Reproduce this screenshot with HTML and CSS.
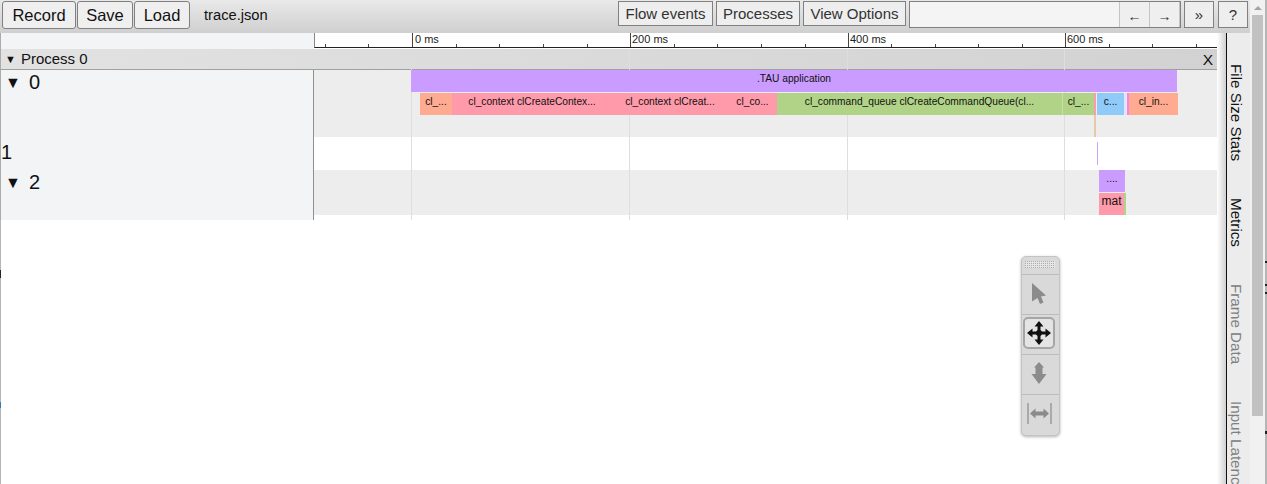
FILE: index.html
```html
<!DOCTYPE html>
<html lang="en">

<head>
    <meta charset="UTF-8">
    <title>trace.json</title>
    <link rel="stylesheet" href="styles.css">
</head>

<body>
    <div class="page">
        <div class="main">
            <header class="toolbar">
                <button class="btn-big btn-record">Record</button>
                <button class="btn-big btn-save">Save</button>
                <button class="btn-big btn-load">Load</button>
                <span class="file-name">trace.json</span>
                <div class="toolbar-right">
                    <button class="btn-small btn-flow">Flow events</button>
                    <button class="btn-small btn-proc">Processes</button>
                    <button class="btn-small btn-view">View Options</button>
                    <div class="search">
                        <span class="search-box"></span>
                        <span class="search-arrow">←</span>
                        <span class="search-arrow">→</span>
                    </div>
                    <span class="btn-square">»</span>
                    <span class="btn-square">?</span>
                </div>
            </header>

            <div class="content">
                <div class="view">
                    <div class="ruler-row">
                        <div class="label-col"></div>
                        <div class="ruler">
                            <svg class="ruler-ticks" width="903" height="14">
                                <path d="M97.5 0V14M315.5 0V14M533.5 0V14M750.5 0V14" stroke="#444" />
                                <path d="M10.5 11V14M53.5 11V14M141.5 11V14M184.5 11V14M228.5 11V14M272.5 11V14M359.5 11V14M402.5 11V14M446.5 11V14M490.5 11V14M576.5 11V14M620.5 11V14M663.5 11V14M707.5 11V14M794.5 11V14M837.5 11V14M881.5 11V14" stroke="#444" />
                            </svg>
                            <span class="tick-label tick-0">0 ms</span>
                            <span class="tick-label tick-200">200 ms</span>
                            <span class="tick-label tick-400">400 ms</span>
                            <span class="tick-label tick-600">600 ms</span>
                        </div>
                    </div>

                    <div class="process-head">
                        <span class="process-arrow">▼</span>
                        <span>Process 0</span>
                        <span class="process-close">X</span>
                    </div>

                    <div class="row row-0">
                        <div class="label-col row-label"><span class="arrow">▼</span>0</div>
                        <div class="track grey">
                            <div class="slice purple s-tau">.TAU application</div>
                            <div class="slice salmon s-a">cl_...</div>
                            <div class="slice pink s-b">cl_context clCreateContex...</div>
                            <div class="slice pink s-c">cl_context clCreat...</div>
                            <div class="slice pink s-d">cl_co...</div>
                            <div class="slice green s-e">cl_command_queue clCreateCommandQueue(cl...</div>
                            <div class="slice green s-f">cl_...</div>
                            <div class="slice pink s-g"></div>
                            <div class="slice blue s-h">c...</div>
                            <div class="slice pale s-i"></div>
                            <div class="slice magenta s-j"></div>
                            <div class="slice salmon s-k">cl_in...</div>
                            <div class="slice tan s-l"></div>
                        </div>
                    </div>

                    <div class="row row-1">
                        <div class="label-col row-label plain">1</div>
                        <div class="track">
                            <div class="slice lavender s-m"></div>
                        </div>
                    </div>

                    <div class="row row-2">
                        <div class="label-col row-label"><span class="arrow">▼</span>2</div>
                        <div class="track grey">
                            <div class="slice purple s-n">....</div>
                            <div class="slice pink s-o">mat</div>
                            <div class="slice green s-p"></div>
                        </div>
                    </div>

                    <div class="row row-end">
                        <div class="label-col"></div>
                        <div class="track"></div>
                    </div>

                    <i class="grid-line grid-0"></i>
                    <i class="grid-line grid-200"></i>
                    <i class="grid-line grid-400"></i>
                    <i class="grid-line grid-600"></i>
                </div>

                <aside class="side">
                    <div class="side-shade"></div>
                    <div class="side-tabs">
                        <span class="tab tab-on">File Size Stats</span>
                        <span class="tab tab-on">Metrics</span>
                        <span class="tab">Frame Data</span>
                        <span class="tab">Input Latency</span>
                    </div>
                </aside>
            </div>

            <div class="edge-left"></div>

            <div class="palette">
                <div class="grip"></div>
                <div class="tool">
                    <svg width="14" height="21" viewBox="0 0 14 21"><path d="M0 0L14 12.500L9 13.500L11.500 19.500L8 21L5.500 15L0 18.500Z" fill="#8b8b8b" /></svg>
                </div>
                <div class="tool">
                    <span class="tool-on">
                        <svg width="26" height="26" viewBox="0 0 26 26"><path d="M13 1L17.500 6.500H14.500V10L16 11.500H19.500V8.500L25 13L19.500 17.500V14.500H16L14.500 16V19.500H17.500L13 25L8.500 19.500H11.500V16L10 14.500H6.500V17.500L1 13L6.500 8.500V11.500H10L11.500 10V6.500H8.500Z" fill="#111" /></svg>
                    </span>
                </div>
                <div class="tool">
                    <svg width="16" height="22" viewBox="0 0 16 22"><path d="M8 0L13 5.500H11.500V12H15.500L8 22L0.500 12H4.500V5.500H3Z" fill="#8b8b8b" /></svg>
                </div>
                <div class="tool">
                    <svg width="25" height="21" viewBox="0 0 25 21"><path d="M1 0V21M24 0V21" stroke="#9a9a9a" stroke-width="1.500" /><path d="M3 10.500L8.500 5.500V8.500H16.500V5.500L22 10.500L16.500 15.500V12.500H8.500V15.500Z" fill="#8b8b8b" /></svg>
                </div>
            </div>
        </div>

        <div class="scrollbar">
            <span class="scroll-up"></span>
            <span class="scroll-thumb"></span>
        </div>
        <div class="edge-right"></div>
    </div>
</body>

</html>
```

FILE: styles.css
```css
html,
body {
    margin: 0;
    height: 100%;
    overflow: hidden;
}

body {
    font-family: "Liberation Sans", Arial, sans-serif;
    color: #111;
    background: #fff;
}

.page {
    display: flex;
    height: 484px;
}

.main {
    position: relative;
    width: 1250px;
    display: flex;
    flex-direction: column;
}

/* toolbar */
.toolbar {
    height: 33px;
    flex: none;
    display: flex;
    align-items: flex-start;
    padding: 1px 2px 0 2px;
    box-sizing: border-box;
    background: linear-gradient(#e9e9e9, #cfcfcf);
}

.btn-big {
    height: 28px;
    padding: 0;
    margin-right: 1px;
    font: 16.500px "Liberation Sans", Arial, sans-serif;
    color: #111;
    background: #efefef;
    border: 1px solid #808080;
    border-radius: 3px;
}

.btn-record { width: 74px; }
.btn-save { width: 56px; }
.btn-load { width: 56px; }

.file-name {
    margin: 6px 0 0 13px;
    font-size: 14.700px;
}

.toolbar-right {
    margin-left: auto;
    display: flex;
    align-items: flex-start;
}

.btn-small {
    height: 25px;
    padding: 0;
    margin-right: 3px;
    font: 15px "Liberation Sans", Arial, sans-serif;
    color: #333;
    background: #eee;
    border: 1px solid #808080;
}

.btn-flow { width: 95px; }
.btn-proc { width: 84px; }
.btn-view { width: 103px; }

.search {
    display: flex;
    height: 27px;
    width: 272px;
    box-sizing: border-box;
    background: #f4f4f4;
    border: 1px solid #808080;
    margin-right: 3px;
}

.search-box {
    flex: 1;
}

.search-arrow {
    width: 29px;
    text-align: center;
    padding-top: 6px;
    font-size: 14px;
    color: #333;
    background: #efefef;
    border-left: 1px solid #c4c4c4;
    border-right: 1px solid #c4c4c4;
    margin-left: -1px;
}

.btn-square {
    width: 30px;
    height: 27px;
    box-sizing: border-box;
    margin-right: 4px;
    text-align: center;
    line-height: 25px;
    font-size: 15px;
    color: #333;
    background: #eee;
    border: 1px solid #808080;
}

.btn-square:last-child {
    margin-right: 0;
}

/* view and side panel */
.content {
    flex: 1;
    display: flex;
}

.view {
    position: relative;
    width: 1217px;
    flex: none;
    align-self: flex-start;
    border-left: 1px solid #ababab;
    box-sizing: border-box;
}

.label-col {
    width: 312px;
    flex: none;
    background: #f3f4f6;
    border-right: 1px solid #8f8f8f;
}

.ruler-row {
    display: flex;
    height: 16px;
}

.ruler-row .label-col {
    border-right: 0;
    width: 313px;
}

.ruler {
    position: relative;
    flex: 1;
    height: 15px;
    overflow: hidden;
}

.ruler-ticks {
    display: block;
    border-bottom: 1px solid #222;
    border-left: 1px solid #888;
}

.tick-label {
    position: absolute;
    top: 0;
    font-size: 11px;
    line-height: 13px;
    color: #222;
}

.tick-0 { left: 101px; }
.tick-200 { left: 318px; }
.tick-400 { left: 536px; }
.tick-600 { left: 753px; }

.process-head {
    height: 21px;
    padding-bottom: 1px;
    box-sizing: border-box;
    display: flex;
    align-items: center;
    font-size: 15px;
    background: linear-gradient(to right, #e2e2e2, #d2d2d2);
    border-bottom: 1px solid #a0a0a0;
}

.process-arrow {
    font-size: 11px;
    margin: 0 5px 0 4px;
}

.process-close {
    margin-left: auto;
    margin-right: 4px;
    padding-top: 2px;
    font-size: 15.500px;
}

.row {
    display: flex;
}

.row-0 { height: 67px; }
.row-1 { height: 33px; }
.row-2 { height: 45px; }
.row-end { height: 5px; }

.row-label {
    font-size: 20px;
    line-height: 24px;
}

.row-label.plain {
    line-height: 30px;
}

.arrow {
    display: inline-block;
    width: 28px;
    padding-left: 4px;
    box-sizing: border-box;
    font-size: 16px;
    vertical-align: 1px;
}

.track {
    position: relative;
    flex: 1;
}

.grey {
    background: #ededed;
}

/* slices are placed by time on the track */
.slice {
    position: absolute;
    z-index: 1;
    height: 22px;
    overflow: hidden;
    text-align: center;
    white-space: nowrap;
    font-size: 10.200px;
    line-height: 17px;
    color: #111;
}

.purple { background: #cb9cff; }
.salmon { background: #ffab91; }
.pink { background: #ff9aab; }
.green { background: #b1d388; }
.blue { background: #90caf9; }
.pale { background: #dbe9f7; }
.magenta { background: #ff80e0; }
.tan { background: #e8c8a8; }
.lavender { background: #c9a6f5; }

.s-tau { left: 97px; width: 766px; top: 0; }
.s-a { left: 106px; width: 32px; top: 23px; }
.s-b { left: 138px; width: 160px; top: 23px; }
.s-c { left: 298px; width: 116px; top: 23px; }
.s-d { left: 414px; width: 49px; top: 23px; }
.s-e { left: 463px; width: 285px; top: 23px; }
.s-f { left: 748px; width: 32px; top: 23px; border-left: 1px solid #c6dfa8; box-sizing: border-box; }
.s-g { left: 780px; width: 2px; top: 23px; }
.s-h { left: 783px; width: 27px; top: 23px; }
.s-i { left: 810px; width: 3px; top: 23px; }
.s-j { left: 813px; width: 2px; top: 23px; }
.s-k { left: 815px; width: 49px; top: 23px; }
.s-l { left: 780px; width: 2px; top: 45px; }
.s-m { left: 783px; width: 1px; height: 23px; top: 5px; }
.s-n { left: 785px; width: 26px; top: 0; }
.s-o { left: 785px; width: 25px; top: 23px; font-size: 12px; }
.s-p { left: 810px; width: 2px; top: 23px; }

.grid-line {
    position: absolute;
    top: 16px;
    bottom: 0;
    width: 1px;
    background: #dedede;
}

.grid-0 { left: 410px; }
.grid-200 { left: 628px; }
.grid-400 { left: 846px; }
.grid-600 { left: 1063px; }

.side {
    flex: 1;
    display: flex;
    min-width: 0;
}

.side-shade {
    width: 9px;
    flex: none;
    background: linear-gradient(to right, #fff, #d0d0d0);
    border-right: 1px solid #111;
}

.side-tabs {
    flex: 1;
    overflow: hidden;
    background: #ececec;
    display: flex;
    flex-direction: column;
    align-items: flex-start;
    padding-top: 31px;
    gap: 37px;
}

.tab {
    writing-mode: vertical-rl;
    font-size: 15.200px;
    line-height: 19px;
    color: #808080;
    white-space: nowrap;
}

.tab-on {
    color: #111;
}

.edge-left {
    position: absolute;
    left: 0;
    top: 220px;
    bottom: 0;
    width: 1px;
    background: linear-gradient(#b5b5b5 50px, #222 50px 58px, #b5b5b5 58px 182px, #2f7fc0 182px 188px, #b5b5b5 188px);
}

/* floating tool palette */
.palette {
    position: absolute;
    left: 1021px;
    top: 256px;
    width: 39px;
    height: 180px;
    box-sizing: border-box;
    background: #d9d9d9;
    border: 1px solid #c4c4c4;
    border-radius: 5px;
    box-shadow: 0 1px 3px rgba(0, 0, 0, 0.3);
}

.grip {
    height: 7px;
    margin: 4px 4px 6px 3px;
    background:
        repeating-linear-gradient(to right, transparent 0 1px, #e6e6e6 1px 2px),
        repeating-linear-gradient(#ababab 0 1px, #e6e6e6 1px 2px);
}

.tool {
    height: 36px;
    padding: 0 3px 3px 0;
    display: flex;
    align-items: center;
    justify-content: center;
    border-top: 1px solid #bcbcbc;
}

.tool-on {
    width: 32px;
    height: 32px;
    display: flex;
    align-items: center;
    justify-content: center;
    background: #e4e4e4;
    border: 2px solid #a6a6a6;
    border-radius: 5px;
    box-sizing: border-box;
}

/* page scrollbar */
.scrollbar {
    width: 15px;
    height: 484px;
    background: #f1f1f1;
    padding-top: 6px;
    box-sizing: border-box;
}

.scroll-up {
    display: block;
    width: 0;
    margin: 0 auto;
    border: 4px solid transparent;
    border-top: 0;
    border-bottom: 4px solid #a3a3a3;
}

.scroll-thumb {
    display: block;
    width: 11px;
    height: 401px;
    margin: 5px 0 0 2px;
    background: #c1c1c1;
}

.edge-right {
    width: 2px;
    background: linear-gradient(#b5b5b5 261px, #222 261px 263px, #b5b5b5 263px 284px, #222 284px 286px, #b5b5b5 286px 292px, #222 292px 294px, #b5b5b5 294px 431px, #222 431px 434px, #b5b5b5 434px);
}
```
